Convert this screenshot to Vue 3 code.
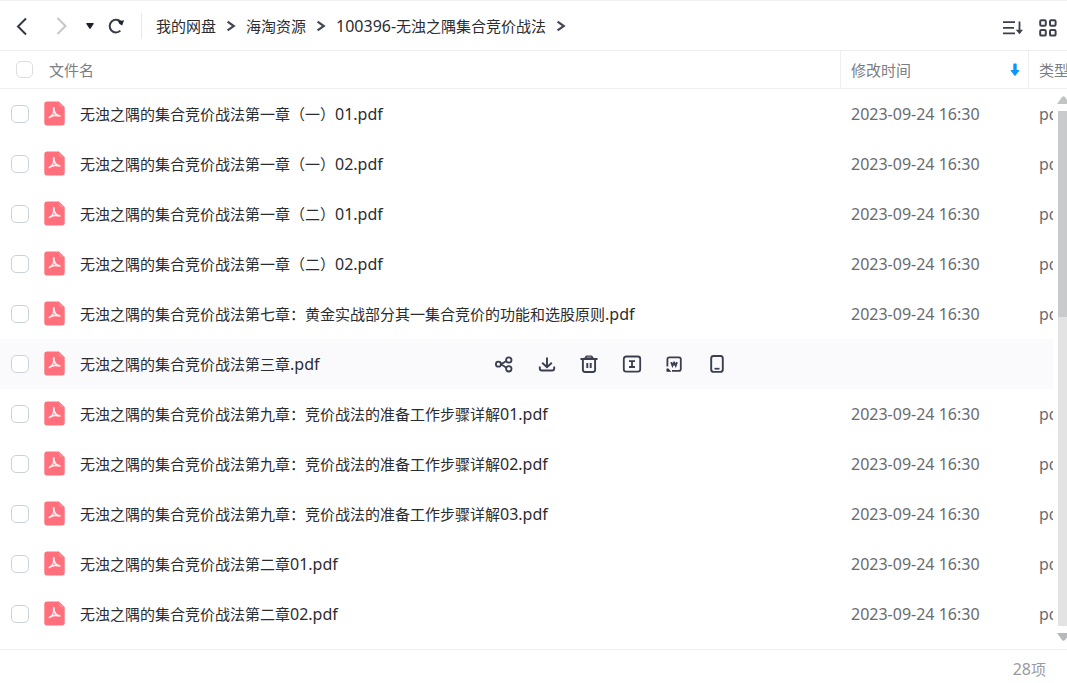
<script setup>
const crumbs = ['我的网盘', '海淘资源', '100396-无浊之隅集合竞价战法']

const prefix = '无浊之隅的集合竞价战法'
const files = [
  '第一章（一）01.pdf',
  '第一章（一）02.pdf',
  '第一章（二）01.pdf',
  '第一章（二）02.pdf',
  '第七章：黄金实战部分其一集合竞价的功能和选股原则.pdf',
  '第三章.pdf',
  '第九章：竞价战法的准备工作步骤详解01.pdf',
  '第九章：竞价战法的准备工作步骤详解02.pdf',
  '第九章：竞价战法的准备工作步骤详解03.pdf',
  '第二章01.pdf',
  '第二章02.pdf'
].map((name, i) => ({
  id: i,
  name: prefix + name,
  time: '2023-09-24 16:30',
  type: 'pdf',
  active: i === 5
}))

// Latin runs are set one size larger than the Chinese text around them
const runs = (text) =>
  (text.match(/[\x20-\x7e]+|[^\x20-\x7e]+/g) || []).map((t) => ({
    t,
    latin: /^[\x20-\x7e]/.test(t)
  }))
</script>

<template>
  <div class="drive">
    <header class="toolbar">
      <nav class="history" aria-label="导航">
        <button type="button" aria-label="后退">
          <svg width="14" height="20" viewBox="0 0 14 20"><path d="M12 2.500 4 10.500l8 8" fill="none" stroke="#343846" stroke-width="2" /></svg>
        </button>
        <button type="button" class="forward" aria-label="前进" disabled>
          <svg width="14" height="20" viewBox="0 0 14 20"><path d="M3.500 2 11.500 10l-8 8" fill="none" stroke="#c6c7ca" stroke-width="2" /></svg>
        </button>
        <button type="button" class="recent" aria-label="历史">
          <svg width="10" height="8" viewBox="0 0 10 8"><path d="M1.800 1h6.400q.9 0 .4.9L5.600 6.500q-.6.8-1.200 0L1.400 1.900Q.9 1 1.800 1z" fill="#1d2030" /></svg>
        </button>
        <button type="button" class="refresh" aria-label="刷新">
          <svg width="18" height="18" viewBox="0 0 18 18"><path d="M13.400 13.600A6.300 6.300 0 1 1 13.600 4.800" fill="none" stroke="#383c4a" stroke-width="2" /><path d="M10.800 4.200 17 3.200 15.200 8.400 12.600 7z" fill="#202432" /></svg>
        </button>
      </nav>
      <nav class="crumbs" aria-label="路径">
        <template v-for="c in crumbs" :key="c">
          <a href="#"><span v-for="(r, i) in runs(c)" :key="i" :class="{ latin: r.latin }">{{ r.t }}</span></a>
          <svg width="10" height="12" viewBox="0 0 10 12"><path d="M1.600 1.600 7.800 6l-6.200 4.400" fill="none" stroke="#444754" stroke-width="2.200" /></svg>
        </template>
      </nav>
      <div class="views">
        <button type="button" aria-label="排序">
          <svg width="22" height="16" viewBox="0 0 22 16"><g fill="none" stroke="#3c404d" stroke-width="1.800"><path d="M1 2.200h12M1 7.800h11M1 13.400h12M17.500 1.500v11" /></g><path d="M13.800 9.800h7.200l-3.500 4.400z" fill="#3c404d" /></svg>
        </button>
        <button type="button" aria-label="网格视图">
          <svg width="18" height="18" viewBox="0 0 18 18"><g fill="none" stroke="#3c404d" stroke-width="2"><rect x="1.200" y="1.200" width="5.600" height="5.600" rx="1.200" /><rect x="11" y="1.200" width="5.600" height="5.600" rx="1.200" /><rect x="1.200" y="11" width="5.600" height="5.600" rx="1.200" /><rect x="11" y="11" width="5.600" height="5.600" rx="1.200" /></g></svg>
        </button>
      </div>
    </header>

    <main class="list">
      <table>
        <colgroup>
          <col />
          <col class="col-time" />
          <col class="col-type" />
          <col class="col-gutter" />
        </colgroup>
        <thead>
          <tr>
            <th scope="col">
              <div class="head-name">
                <input type="checkbox" aria-label="全选" />
                <span>文件名</span>
              </div>
            </th>
            <th scope="col" class="split">
              <div class="head-time">
                <span>修改时间</span>
                <svg width="10" height="14" viewBox="0 0 10 14"><path d="M3.300 1.200q0-.7.7-.7h2q.7 0 .7.7V7h2.200q.9 0 .3.7L5.600 12.400q-.6.6-1.200 0L.8 7.700Q.2 7 1.100 7h2.200z" fill="#0a97ff" /></svg>
              </div>
            </th>
            <th scope="col" class="split" colspan="2"><div class="clip">类型</div></th>
          </tr>
        </thead>
        <tbody>
          <tr v-for="f in files" :key="f.id" :class="{ active: f.active }">
            <td>
              <div class="file">
                <input :id="'file-' + f.id" type="checkbox" />
                <svg class="pdf" width="21" height="26" viewBox="0 0 21 26">
                  <path d="M3 .5h11.800L20.700 6.200v15.600a2.700 2.700 0 0 1-2.700 2.700H3A2.700 2.700 0 0 1 .3 21.800V3.200A2.700 2.700 0 0 1 3 .5z" fill="#ff6f7c" />
                  <path d="M14.800.5 20.700 6.200h-3.900a2 2 0 0 1-2-2z" fill="#ff8490" />
                  <path d="M9.300 6.100q1.700-.2 1.500 1.700-.3 2.900 1.900 5 1.100 1 3.300 1.200.9.300.6 1.200-.2.700-1.100.6-2.500-.6-4.500-.5-2.700.2-4.900 1.800-1 .6-1.500-.1-.5-.9.600-1.500 2.400-1.200 3.300-3.100.9-2 .3-4.700-.1-1.300.5-1.600zM9.900 12.100l-1 1.900 2.300-.4z" fill="#ffeff0" fill-rule="evenodd" />
                </svg>
                <label :for="'file-' + f.id"><span v-for="(r, i) in runs(f.name)" :key="i" :class="{ latin: r.latin }">{{ r.t }}</span></label>
                <div v-if="f.active" class="actions">
                  <button type="button" aria-label="分享">
                    <svg width="20" height="20" viewBox="0 0 20 20"><g fill="none" stroke="#3a3e4e" stroke-width="1.800"><circle cx="4.400" cy="10.200" r="2.500" /><circle cx="14.800" cy="6" r="2.700" /><circle cx="14.800" cy="14.800" r="2.700" /><path d="M6.800 9.800q2.800-.6 5.500-3M6.800 10.600q2.800.6 5.500 3.200" /></g></svg>
                  </button>
                  <button type="button" aria-label="下载">
                    <svg width="20" height="20" viewBox="0 0 20 20"><path d="M10 3.500v9.800M5.200 8.800 10 13.300l4.800-4.500M2.800 12.500v2q0 2 2 2h10.400q2 0 2-2v-2" fill="none" stroke="#3a3e4e" stroke-width="1.900" /></svg>
                  </button>
                  <button type="button" aria-label="删除">
                    <svg width="20" height="20" viewBox="0 0 20 20"><path d="M1.500 5h17M3.900 5v10.800q0 2.200 2.200 2.200h7.800q2.200 0 2.200-2.200V5M8.300 9v5M11.700 9v5" fill="none" stroke="#3a3e4e" stroke-width="1.900" /><path d="M4.800 4.800 6.600 2q.3-.4.800-.4h5.200q.5 0 .8.400l1.800 2.800z" fill="#3a3e4e" /><path d="M7.700 3.100h4.600" stroke="#a3a6b0" stroke-width="1" /></svg>
                  </button>
                  <button type="button" aria-label="重命名">
                    <svg width="20" height="20" viewBox="0 0 20 20"><g fill="none" stroke="#3a3e4e" stroke-width="1.800"><rect x="1.800" y="2.500" width="16.400" height="15.200" rx="2.400" /><path d="M7 7.200h6M10 7.200v5.800M7 13h6" /></g></svg>
                  </button>
                  <button type="button" aria-label="转为Word">
                    <svg width="20" height="20" viewBox="0 0 20 20"><path d="M3.400 12.500V5.300q0-1.900 1.900-1.900h9.600q1.900 0 1.900 1.900v9.600q0 1.900-1.900 1.900H8" fill="none" stroke="#3a3e4e" stroke-width="1.800" /><path d="M2.500 17.700v-2.900l1.500-.6 3.500 3.500z" fill="#2d3142" /><path d="M7.200 8.200 8.500 11.700l1.600-3 1.600 3L13 8.200" fill="none" stroke="#3a3e4e" stroke-width="1.900" /></svg>
                  </button>
                  <button type="button" aria-label="发送到手机">
                    <svg width="20" height="20" viewBox="0 0 20 20"><rect x="4.200" y="2" width="11.600" height="15.900" rx="2.400" fill="none" stroke="#3a3e4e" stroke-width="1.900" /><path d="M7.500 14.700h5" stroke="#3a3e4e" stroke-width="1.700" /></svg>
                  </button>
                </div>
              </div>
            </td>
            <td class="meta"><span v-if="!f.active">{{ f.time }}</span></td>
            <td class="meta"><div v-if="!f.active" class="clip">{{ f.type }}</div></td>
          </tr>
        </tbody>
      </table>
      <div class="scrollbar" aria-hidden="true">
        <svg width="10" height="8" viewBox="0 0 10 8"><path d="M0 8 5 1q1.500-1.500 3 0l5 7z" fill="#c1c3c5" /></svg>
        <div class="track"><div class="thumb"></div></div>
        <svg width="10" height="8" viewBox="0 0 10 8"><path d="M0 0 5 7q1.500 1.500 3 0l5-7z" fill="#b5b8bc" /></svg>
      </div>
    </main>

    <footer class="status">28<span>项</span></footer>
  </div>
</template>

<style>
body {
  margin: 0;
}
</style>

<style scoped>
.drive {
  display: flex;
  flex-direction: column;
  height: 100vh;
  overflow: hidden;
  background: #fff;
  color: #2b2c30;
  font-family: "Noto Sans", "Noto Sans CJK SC", sans-serif;
  font-size: 15px;
  line-height: 20px;
}
.latin {
  font-size: 16px;
}
button {
  display: flex;
  align-items: center;
  justify-content: center;
  padding: 0;
  border: 0;
  background: none;
}
svg {
  display: block;
  flex: none;
}
.toolbar {
  box-sizing: border-box;
  display: flex;
  align-items: center;
  flex: none;
  height: 51px;
  padding: 0 10px 0 14px;
  border-top: 1px solid #f1f1f2;
  border-bottom: 1px solid #eeeff0;
}
.history {
  display: flex;
  align-items: center;
  height: 26px;
  padding-right: 16px;
  border-right: 1px solid #e8e8ea;
}
.forward {
  margin-left: 26px;
}
.recent {
  margin-left: 17px;
}
.refresh {
  margin-left: 12px;
}
.crumbs {
  display: flex;
  align-items: center;
  gap: 10px;
  flex: 1;
  margin-left: 14px;
  white-space: nowrap;
}
.crumbs a {
  color: inherit;
  text-decoration: none;
}
.views {
  display: flex;
  align-items: center;
  gap: 15px;
  padding-top: 4px;
}
.list {
  position: relative;
  flex: 1;
  min-height: 0;
  overflow: hidden;
}
table {
  width: 100%;
  table-layout: fixed;
  border-collapse: separate;
  border-spacing: 0;
}
.col-time {
  width: 188px;
}
.col-type {
  width: 25px;
}
.col-gutter {
  width: 14px;
}
th,
td {
  padding: 0;
  text-align: left;
  font-weight: 400;
  white-space: nowrap;
}
th {
  height: 37px;
  border-bottom: 1px solid #eeeff0;
  color: #7c7e84;
}
.split {
  border-left: 1px solid #eeeff0;
}
.split > div {
  padding-left: 10px;
}
.head-name {
  display: flex;
  align-items: center;
  gap: 16px;
  padding-left: 16px;
}
.head-time {
  display: flex;
  align-items: center;
  justify-content: space-between;
  padding-right: 8px;
}
.clip {
  overflow: hidden;
}
td {
  height: 50px;
}
.meta {
  padding-left: 11px;
  color: #696b70;
  font-size: 16px;
}
.active td {
  background: #fafafc;
}
input {
  appearance: none;
  box-sizing: border-box;
  flex: none;
  width: 18px;
  height: 18px;
  margin: 0;
  border: 1px solid #cbd3da;
  border-radius: 5px;
  background: #fff;
}
.head-name input {
  width: 17px;
  height: 17px;
  border-color: #dddee0;
}
.file {
  display: flex;
  align-items: center;
  padding-left: 11px;
}
.pdf {
  margin: 0 15px;
}
.actions {
  display: flex;
  justify-content: space-between;
  width: 235px;
  margin: 0 112px 0 auto;
}
.actions button {
  width: 22px;
}
.scrollbar {
  position: absolute;
  top: 45px;
  right: 0;
  bottom: 8px;
  display: flex;
  flex-direction: column;
  align-items: flex-end;
  gap: 7px;
  width: 10px;
}
.track {
  flex: 1;
  width: 9px;
  background: #e3e3e4;
}
.thumb {
  height: 40%;
  background: #c9cacc;
}
.status {
  flex: none;
  height: 26px;
  padding: 7px 21px 0 0;
  border-top: 1px solid #eeeff0;
  color: #999ba0;
  font-size: 16px;
  line-height: 24px;
  text-align: right;
}
.status span {
  font-size: 15px;
}
</style>
